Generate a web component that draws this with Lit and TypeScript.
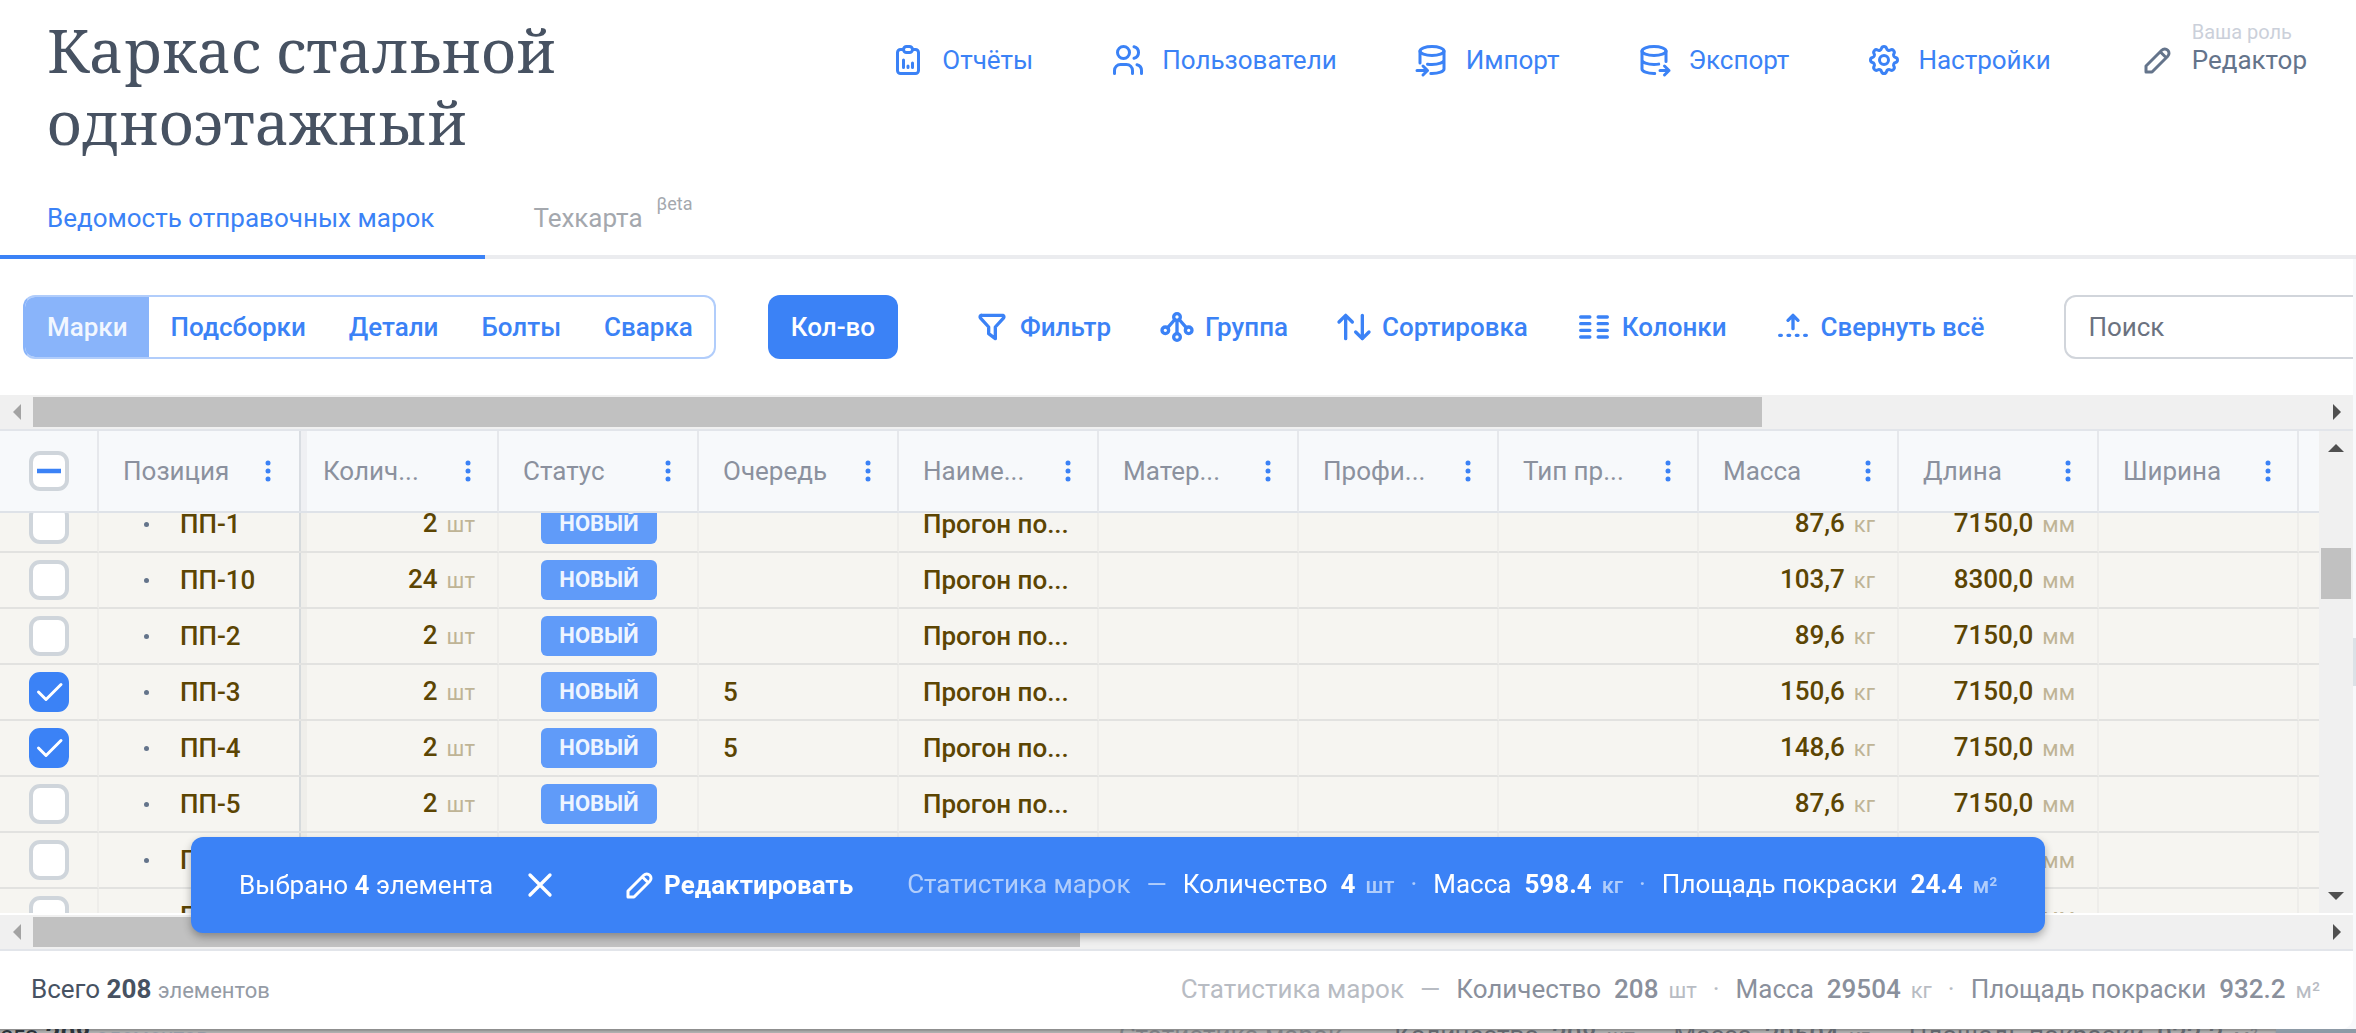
import { LitElement, html, css, svg, nothing } from "lit";
import { customElement, state } from "lit/decorators.js";
import { classMap } from "lit/directives/class-map.js";
import { styleMap } from "lit/directives/style-map.js";

const ICONS = {
  report: svg`<path d="M9 5h-2a2 2 0 0 0 -2 2v12a2 2 0 0 0 2 2h10a2 2 0 0 0 2 -2v-12a2 2 0 0 0 -2 -2h-2"/><rect x="9" y="3" width="6" height="4" rx="2"/><path d="M9 17v-5M12 17v-1M15 17v-3"/>`,
  users: svg`<circle cx="9" cy="7" r="4"/><path d="M3 21v-2a4 4 0 0 1 4 -4h4a4 4 0 0 1 4 4v2M16 3.13a4 4 0 0 1 0 7.75M21 21v-2a4 4 0 0 0 -3 -3.85"/>`,
  dbImport: svg`<ellipse cx="12" cy="6" rx="8" ry="3"/><path d="M4 6v8m5.009 .783c.924 .14 1.933 .217 2.991 .217c4.418 0 8 -1.343 8 -3v-6M11.252 20.987c.246 .009 .496 .013 .748 .013c4.418 0 8 -1.343 8 -3v-6m-18 7h7m-3 -3l3 3l-3 3"/>`,
  dbExport: svg`<ellipse cx="12" cy="6" rx="8" ry="3"/><path d="M4 6v6c0 1.657 3.582 3 8 3c1.118 0 2.183 -.086 3.15 -.241M20 13v-7M4 12v6c0 1.657 3.582 3 8 3c.157 0 .312 -.002 .466 -.005M16 19h6M19 16l3 3l-3 3"/>`,
  settings: svg`<path d="M10.325 4.317c.426 -1.756 2.924 -1.756 3.35 0a1.724 1.724 0 0 0 2.573 1.066c1.543 -.94 3.31 .826 2.37 2.37a1.724 1.724 0 0 0 1.065 2.572c1.756 .426 1.756 2.924 0 3.35a1.724 1.724 0 0 0 -1.066 2.573c.94 1.543 -.826 3.31 -2.37 2.37a1.724 1.724 0 0 0 -2.572 1.065c-.426 1.756 -2.924 1.756 -3.35 0a1.724 1.724 0 0 0 -2.573 -1.066c-1.543 .94 -3.31 -.826 -2.37 -2.37a1.724 1.724 0 0 0 -1.065 -2.572c-1.756 -.426 -1.756 -2.924 0 -3.35a1.724 1.724 0 0 0 1.066 -2.573c-.94 -1.543 .826 -3.31 2.37 -2.37c1 .608 2.296 .07 2.572 -1.065z"/><circle cx="12" cy="12" r="3"/>`,
  pencil: svg`<path d="M4 20h4l10.5 -10.5a2.828 2.828 0 1 0 -4 -4l-10.5 10.5v4M13.5 6.5l4 4"/>`,
  filter: svg`<path d="M5.5 5h13a1 1 0 0 1 .5 1.5l-5 5.5v7l-4 -3v-4l-5 -5.5a1 1 0 0 1 .5 -1.5"/>`,
  group: svg`<circle cx="12" cy="6" r="2"/><circle cx="5" cy="14" r="2"/><circle cx="19" cy="14" r="2"/><circle cx="12" cy="18" r="2"/><path d="M12 8v8M6.316 12.496l4.368 -4.992M17.684 12.496l-4.366 -4.99"/>`,
  sort: svg`<path d="M3 9l4 -4l4 4m-4 -4v14M21 15l-4 4l-4 -4m4 4v-14"/>`,
  columns: svg`<path d="M4 6h5.5M4 10h5.5M4 14h5.5M4 18h5.5M14.5 6h5.5M14.5 10h5.5M14.5 14h5.5M14.5 18h5.5"/>`,
  foldUp: svg`<path d="M12 13v-8l-3 3m6 0l-3 -3M9 17h1M14 17h1M19 17h1M4 17h1"/>`,
  close: svg`<path d="M18 6l-12 12M6 6l12 12"/>`,
  check: svg`<path d="M5 12l5 5l10 -10"/>`,
  dash: svg`<path stroke-width="3" stroke-linecap="butt" d="M4 12h16"/>`,
};
type IconName = keyof typeof ICONS;

const icon = (name: IconName, size = "") => html`
  <svg class="icon ${size}" viewBox="0 0 24 24" aria-hidden="true">${ICONS[name]}</svg>`;

interface Row { name: string; count: string; queue: string; mass: string; length: string; checked: boolean; }

const row = (name: string, count: string, mass: string, length = "7150,0", queue = ""): Row =>
  ({ name, count, mass, length, queue, checked: queue !== "" });

const NAV: [IconName, string][] = [
  ["report", "Отчёты"], ["users", "Пользователи"], ["dbImport", "Импорт"],
  ["dbExport", "Экспорт"], ["settings", "Настройки"],
];
const KINDS = ["Марки", "Подсборки", "Детали", "Болты", "Сварка"];
const TOOLS: [IconName, string][] = [
  ["filter", "Фильтр"], ["group", "Группа"], ["sort", "Сортировка"],
  ["columns", "Колонки"], ["foldUp", "Свернуть всё"],
];
const HEADS = ["Позиция", "Колич...", "Статус", "Очередь", "Наиме...", "Матер...", "Профи...", "Тип пр...", "Масса", "Длина", "Ширина"];
const SCROLL_OFFSET = 16;

@customElement("app-root")
export class AppRoot extends LitElement {
  @state() private kind = "Марки";
  @state() private rows: Row[] = [
    row("ПП-1", "2", "87,6"),
    row("ПП-10", "24", "103,7", "8300,0"),
    row("ПП-2", "2", "89,6"),
    row("ПП-3", "2", "150,6", "7150,0", "5"),
    row("ПП-4", "2", "148,6", "7150,0", "5"),
    row("ПП-5", "2", "87,6"),
    row("ПП-6", "2", "87,6"),
    row("ПП-7", "2", "87,6"),
  ];

  static styles = css`
    :host { display: block; }
    * { box-sizing: border-box; }
    button, input { font: inherit; color: inherit; margin: 0; }
    button { background: none; border: 0; padding: 0; cursor: pointer; white-space: nowrap; }
    a { color: inherit; text-decoration: none; }

    .app {
      --blue: #3b82f6;
      height: 100vh; display: flex; flex-direction: column; overflow: hidden; position: relative;
      background: #fff; color: #475569; font: 400 26px/36px Roboto, "Liberation Sans", sans-serif;
    }
    .icon {
      width: 36px; height: 36px; flex: none; fill: none; stroke: currentColor;
      stroke-width: 2; stroke-linecap: round; stroke-linejoin: round;
    }
    .icon.lg { width: 40px; height: 40px; }

    .top { display: flex; justify-content: space-between; align-items: flex-start; padding: 0 49px 0 47px; }
    .title {
      margin: 0; padding-top: 14px; max-width: 640px; color: #475262;
      font: 400 60px/72px "Noto Serif", "DejaVu Serif Condensed", serif;
    }
    .nav { display: flex; align-items: flex-end; gap: 77px; padding-top: 22px; color: var(--blue); }
    .nav-item { display: flex; align-items: center; gap: 16px; }
    .role { display: flex; align-items: flex-end; gap: 16px; margin-left: 12px; color: #64748b; text-align: left; }
    .role-text { display: flex; flex-direction: column; }
    .role-hint { font-size: 20px; line-height: 20px; color: #cbd0da; }

    .tabs { display: flex; height: 101px; border-bottom: 4px solid #ebecef; flex: none; }
    .tab { display: flex; align-items: center; gap: 14px; padding: 22px 49px 0 48px; color: #a4a8ae; margin-bottom: -4px; border-bottom: 4px solid transparent; }
    .tab.active { color: var(--blue); border-bottom-color: var(--blue); padding-left: 47px; padding-right: 51px; }
    .beta { font-size: 18px; line-height: 18px; padding-bottom: 28px; }

    .stage { flex: 1; min-height: 0; display: flex; flex-direction: column; padding-right: 3px; background: #f8f9fb; }
    .panel { flex: 1; min-height: 0; display: flex; flex-direction: column; background: #fff; position: relative; border-bottom-right-radius: 12px; }

    .toolbar { display: flex; align-items: center; padding: 36px 0 36px 23px; overflow: hidden; color: var(--blue); font-weight: 500; flex: none; }
    .kinds { display: flex; height: 64px; border: 2px solid #b1cdfb; border-radius: 12px; overflow: hidden; flex: none; }
    .kind { padding: 0 21px 0 22px; }
    .kind.active { background: #89b4fa; color: #f2f7ff; }
    .kinds:has(.kind.active:first-child) { border-left-color: #89b4fa; }
    .count { height: 64px; padding: 0 23px; border-radius: 12px; background: var(--blue); color: #fff; margin-left: 52px; flex: none; }
    .tools { display: flex; gap: 46px; margin: 0 80px 0 74px; flex: none; }
    .tool { display: flex; align-items: center; gap: 8px; }
    .search { width: 420px; height: 64px; flex: none; border: 2px solid #d1d5db; border-radius: 12px; padding: 0 22px; background: #fff; font-weight: 400; color: #374151; }
    .search::placeholder { color: #6b7280; opacity: 1; }

    .bar { display: flex; background: #f0f0f0; flex: none; }
    .bar.h { height: 34px; }
    .bar.v { width: 34px; flex-direction: column; }
    .step { display: flex; align-items: center; justify-content: center; flex: none; color: #505050; }
    .h .step { width: 33px; }
    .v .step { height: 34px; }
    .step.off { color: #a3a3a3; }
    .arrow { width: 16px; height: 16px; fill: currentColor; }
    .track { flex: 1; min-height: 0; }
    .h .track { padding: 2px 0; }
    .v .track { padding: 0 2px; }
    .thumb { background: #c1c1c1; height: 100%; }
    .v-gap { height: 20%; }

    .grid { flex: 1; min-height: 0; display: flex; border-top: 2px solid #e2e5ea; margin-bottom: 2px; }
    .view { flex: 1; min-width: 0; overflow: hidden; background: #f6f5f1; }
    .table { width: 100%; table-layout: fixed; border-collapse: separate; border-spacing: 0; }
    .c-check { width: 99px; }
    .c-data { width: 200px; }
    .th {
      position: sticky; top: 0; z-index: 1; height: 82px; padding: 0 22px 0 24px; background: #f7f9fb;
      border-right: 2px solid #e6e8ec; border-bottom: 2px solid #dee2e8; font-weight: 400; color: #8b919e; text-align: left;
    }
    .head { display: flex; align-items: center; justify-content: space-between; }
    .more { display: flex; color: var(--blue); }
    .dots { width: 14px; height: 24px; fill: currentColor; }
    .td { height: 56px; padding: 0 22px 0 24px; border-right: 2px solid #eeedea; border-bottom: 2px solid #e2e2e0; color: #5c4503; font-weight: 500; white-space: nowrap; }
    .th.rest, .td.rest { border-right: 0; }
    .th.sel, .td.sel { padding: 0; }
    .th.pin, .td.pin { border-right: 0; padding-right: 24px; }
    .td.edge { background: linear-gradient(to right, #d6dadc 2px, #efeeea 2px 8px, transparent 8px); }
    .th.edge { background: linear-gradient(to right, #d9dde2 2px, #eff0f3 2px 8px, #f7f9fb 8px); }
    .num { display: flex; justify-content: flex-end; align-items: baseline; gap: 9px; }
    .unit { font-size: 22px; font-weight: 400; color: #bfb496; }
    .pos { display: flex; align-items: center; gap: 31px; padding-left: 21px; }
    .bullet { width: 5px; height: 5px; border-radius: 50%; background: #64748b; }
    .td.mid { text-align: center; padding: 0 0 0 2px; }
    .badge { display: inline-block; vertical-align: middle; width: 116px; height: 40px; line-height: 40px; border-radius: 6px; background: #609bf9; color: #eef5ff; font-size: 22px; font-weight: 700; }

    .tick { display: grid; width: 40px; height: 40px; margin: 0 auto; place-items: center; color: #fff; }
    .tick > * { grid-area: 1 / 1; }
    .tick .icon { pointer-events: none; }
    .box { appearance: none; width: 40px; height: 40px; border: 4px solid #cfd5db; border-radius: 11px; background: #fff; }
    .box.on:checked { background: var(--blue); border-color: var(--blue); }
    .tick.some { color: var(--blue); }

    .stats { display: flex; align-items: baseline; gap: 16px; white-space: nowrap; }
    .stat { display: flex; align-items: baseline; gap: 13px; }
    .value { display: flex; align-items: baseline; gap: 10px; font-weight: 500; }
    .small { font-size: 22px; font-weight: 400; opacity: .6; }
    .faint { opacity: .6; font-weight: 400; }

    .footer { display: flex; align-items: center; justify-content: space-between; height: 80px; padding: 0 33px 0 31px; border-top: 2px solid #e2e5ea; color: #8a909c; flex: none; }
    .total { color: #475262; }
    .total-unit { font-size: 22px; color: #959ba5; }

    .selection {
      position: absolute; left: 191px; bottom: 96px; height: 96px; display: flex; align-items: center;
      padding: 0 48px; border-radius: 12px; background: var(--blue); color: #fff; z-index: 3; white-space: nowrap;
      box-shadow: 0 4px 8px rgba(0, 0, 0, .3);
    }
    .clear { display: flex; margin: 0 62px 0 27px; }
    .clear .icon { width: 40px; height: 40px; }
    .edit { display: flex; align-items: center; gap: 6px; font-weight: 700; margin-right: 54px; }
    .selection .value { font-weight: 700; }
    .selection .small { font-weight: 500; }

    .under { display: flex; justify-content: space-between; height: 4px; overflow: hidden; background: #b0b0b0; box-shadow: inset 0 2px 2px rgba(0, 0, 0, .2); border-right: 80px solid #8d9aa6; line-height: 12px; color: #62666d; padding-right: 18px; flex: none; }
    .under .total { margin-left: -30px; color: #2c3239; }
    .side-thumb { position: absolute; right: 0; top: 638px; width: 3px; height: 48px; background: #dce2e7; }
  `;

  firstUpdated() {
    this.renderRoot.querySelector(".view")!.scrollTop = SCROLL_OFFSET;
  }

  private toggle(i: number) {
    this.rows = this.rows.map((r, j) => (j === i ? { ...r, checked: !r.checked } : r));
  }

  private stats(count: string, mass: string, area: string) {
    const items: [string, string, string][] = [["Количество", count, "шт"], ["Масса", mass, "кг"], ["Площадь покраски", area, "м²"]];
    return html`<div class="stats">
      <span class="faint">Статистика марок</span><span class="faint">—</span>
      ${items.map(([label, value, unit], i) => html`
        ${i ? html`<span class="faint">·</span>` : nothing}
        <span class="stat">${label}<span class="value">${value}<span class="small">${unit}</span></span></span>`)}
    </div>`;
  }

  private total() {
    return html`<span class="total">Всего <b>208</b> <span class="total-unit">элементов</span></span>`;
  }

  private step(points: string, off = false) {
    return html`<span class=${classMap({ step: true, off })}><svg class="arrow" viewBox="0 0 16 16"><polygon points=${points}/></svg></span>`;
  }

  private hbar(size: number) {
    return html`<div class="bar h" aria-hidden="true">
      ${this.step("12,0 12,16 4,8", true)}
      <div class="track"><div class="thumb" style=${styleMap({ width: `${size}%` })}></div></div>
      ${this.step("4,0 4,16 12,8")}
    </div>`;
  }

  private quantity(value: string, unit: string) {
    return html`<div class="num">${value}<span class="unit">${unit}</span></div>`;
  }

  private renderRow(r: Row, i: number) {
    return html`<tr>
      <td class="td sel"><label class="tick">
        <input class="box on" type="checkbox" aria-label=${r.name} .checked=${r.checked} @change=${() => this.toggle(i)}>
        ${r.checked ? icon("check") : nothing}</label></td>
      <td class="td pin"><div class="pos"><span class="bullet"></span>${r.name}</div></td>
      <td class="td edge">${this.quantity(r.count, "шт")}</td>
      <td class="td mid"><span class="badge">НОВЫЙ</span></td>
      <td class="td">${r.queue}</td>
      <td class="td">Прогон по...</td>
      <td class="td"></td><td class="td"></td><td class="td"></td>
      <td class="td">${this.quantity(r.mass, "кг")}</td>
      <td class="td">${this.quantity(r.length, "мм")}</td>
      <td class="td"></td><td class="td rest"></td>
    </tr>`;
  }

  render() {
    return html`<div class="app">
      <header class="top">
        <h1 class="title">Каркас стальной одноэтажный</h1>
        <nav class="nav">
          ${NAV.map(([name, label]) => html`<a class="nav-item" href="#">${icon(name)}${label}</a>`)}
          <button class="role">${icon("pencil")}<span class="role-text"><span class="role-hint">Ваша роль</span>Редактор</span></button>
        </nav>
      </header>
      <nav class="tabs">
        <a class="tab active" href="#">Ведомость отправочных марок</a>
        <a class="tab" href="#">Техкарта<span class="beta">βeta</span></a>
      </nav>
      <main class="stage"><div class="panel">
        <div class="toolbar">
          <div class="kinds">${KINDS.map((k) => html`
            <button class=${classMap({ kind: true, active: k === this.kind })} @click=${() => (this.kind = k)}>${k}</button>`)}</div>
          <button class="count">Кол-во</button>
          <div class="tools">${TOOLS.map(([name, label]) => html`<button class="tool">${icon(name, "lg")}${label}</button>`)}</div>
          <input class="search" type="search" placeholder="Поиск" aria-label="Поиск">
        </div>
        ${this.hbar(75.6)}
        <div class="grid">
          <div class="view"><table class="table">
            <colgroup><col class="c-check">${HEADS.map(() => html`<col class="c-data">`)}<col></colgroup>
            <thead><tr>
              <th class="th sel"><label class="tick some"><input class="box" type="checkbox" aria-label="Выбрать все">${icon("dash")}</label></th>
              ${HEADS.map((h, i) => html`<th class=${classMap({ th: true, pin: i === 0, edge: i === 1 })}><div class="head">${h}
                <button class="more" aria-label="Меню столбца"><svg class="dots" viewBox="0 0 14 24"><circle cx="7" cy="4" r="2.5"/><circle cx="7" cy="12" r="2.5"/><circle cx="7" cy="20" r="2.5"/></svg></button></div></th>`)}
              <th class="th rest"></th>
            </tr></thead>
            <tbody>${this.rows.map((r, i) => this.renderRow(r, i))}</tbody>
          </table></div>
          <div class="bar v" aria-hidden="true">
            ${this.step("0,12 16,12 8,4")}
            <div class="track"><div class="v-gap"></div><div class="thumb" style=${styleMap({ height: "12.3%" })}></div></div>
            ${this.step("0,4 16,4 8,12")}
          </div>
        </div>
        ${this.hbar(45.8)}
        <footer class="footer">${this.total()}${this.stats("208", "29504", "932.2")}</footer>
        <div class="selection">
          <span>Выбрано <b>4</b> элемента</span>
          <button class="clear" aria-label="Снять выбор">${icon("close")}</button>
          <button class="edit">${icon("pencil")}Редактировать</button>
          ${this.stats("4", "598.4", "24.4")}
        </div>
      </div></main>
      <div class="under" aria-hidden="true">${this.total()}${this.stats("208", "29504", "932.2")}</div>
      <div class="side-thumb"></div>
    </div>`;
  }
}
